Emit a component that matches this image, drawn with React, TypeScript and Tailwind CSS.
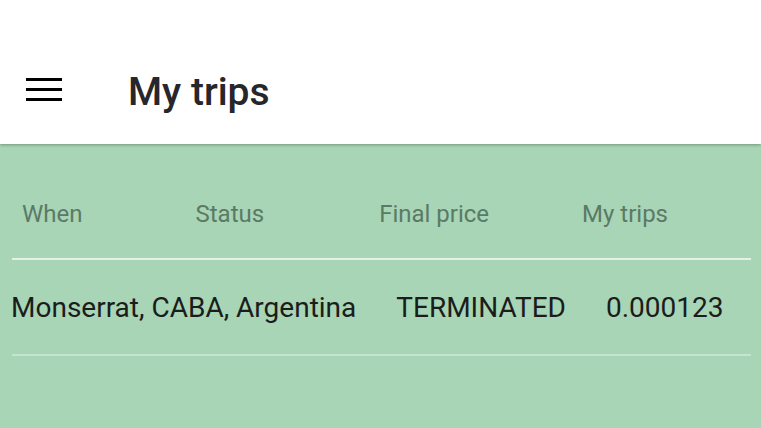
const columns = ["When", "Status", "Final price", "My trips"];

const trips = [
  { place: "Monserrat, CABA, Argentina", status: "TERMINATED", price: "0.000123" },
];

const MenuIcon = () => (
  <div className="flex w-[36px] flex-col gap-[6.5px]">
    <span className="h-[3.5px] w-full bg-black" />
    <span className="h-[3.5px] w-full bg-black" />
    <span className="h-[3.5px] w-full bg-black" />
  </div>
);

export default function App() {
  return (
    <div
      className="flex h-[428px] w-[761px] flex-col overflow-hidden bg-[#a7d5b5]"
      style={{ fontFamily: "Roboto, 'Noto Sans', sans-serif" }}
    >
      <header className="relative z-10 flex h-[144px] shrink-0 items-end bg-white pb-[31px] shadow-[0_1px_3px_rgba(0,0,0,0.3)]">
        <div className="flex h-[48px] items-center">
          <div className="ml-[26px] pt-[1px]">
            <MenuIcon />
          </div>
          <h1 className="ml-[66px] mt-[6px] text-[39px] font-medium leading-[48px] text-[#26262b]">
            My trips
          </h1>
        </div>
      </header>

      <div className="flex h-[114px] shrink-0 items-center pt-[25px] text-[24px] text-[#5b7a66]">
        <span className="ml-[22px]">{columns[0]}</span>
        <span className="ml-[113px]">{columns[1]}</span>
        <span className="ml-[115px]">{columns[2]}</span>
        <span className="ml-[93px]">{columns[3]}</span>
      </div>

      <div className="mx-[12px] h-[2px] w-[739px] bg-[#e4f1e7]" />

      {trips.map((trip) => (
        <div key={trip.place}>
          <div className="flex h-[94px] items-center pt-[2px] text-[28px] text-[#1b1c1b]">
            <span className="ml-[11px]">{trip.place}</span>
            <span className="ml-[40px]">{trip.status}</span>
            <span className="ml-[40px]">{trip.price}</span>
          </div>
          <div className="mx-[12px] h-[2px] w-[739px] bg-[#c4e4cd]" />
        </div>
      ))}
    </div>
  );
}
